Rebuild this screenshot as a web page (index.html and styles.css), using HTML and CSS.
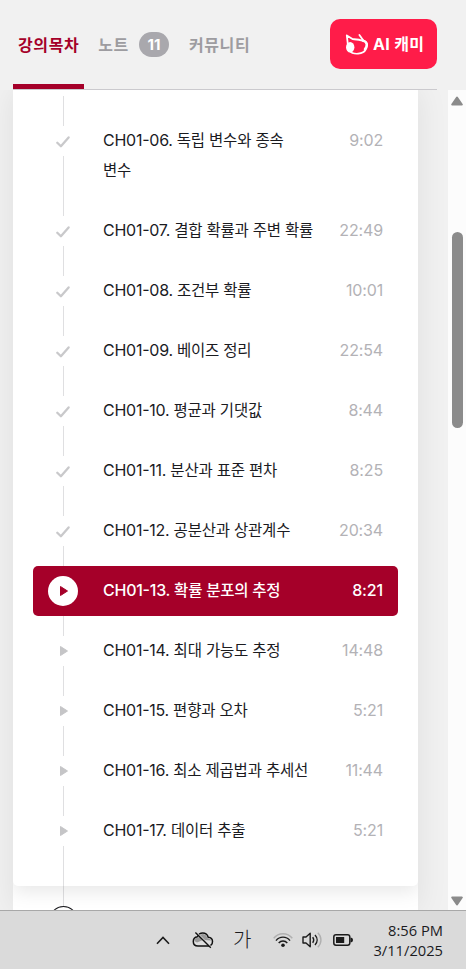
FILE: index.html
```html
<!DOCTYPE html>
<html lang="ko">
<head>
  <meta charset="UTF-8" />
  <meta name="viewport" content="width=device-width, initial-scale=1.0"/>
  <title>강의목차</title>
  <link rel="stylesheet" href="styles.css">
</head>
<body>

<header class="header">
  <nav class="tabs">
    <a class="tab active">강의목차</a>
    <a class="tab note">노트 <span class="badge">11</span></a>
    <a class="tab">커뮤니티</a>
  </nav>
  <button class="ai-button">
    <svg width="24" height="24" viewBox="0 0 24 24" fill="none" stroke="#fff" stroke-linecap="round" stroke-linejoin="round">
      <path d="M2.8 3.4 L3.8 12 M2.8 3.4 L8.9 7.2 C12.4 7.4 15.5 7.4 18.4 8.8 M15.4 3 L19.2 8.2" stroke-width="1.8"/>
      <path d="M18.4 8.5 C23.8 9.4 24 13 22 17 C19.4 22.5 9.4 23.5 5 18.5" stroke-width="1.7"/>
      <path d="M19 8.6 C24 10 23 14.5 20.8 17.2" stroke-width="2.2"/>
      <ellipse cx="6.2" cy="15.2" rx="4.2" ry="5.2" fill="#fff" stroke="none"/>
    </svg>
    <span>AI 캐미</span>
  </button>
</header>

<main class="content">
  <div class="panel">
    <section class="card">
      <ol class="lectures">
        <li><div class="row"><span class="icon"><svg class="check" viewBox="0 0 14 12"><path d="M1.3 6.7 L4.9 10.2 L12.6 1.4"/></svg></span><p class="title"><span class="no">CH01-06.</span> 독립 변수와 종속<br>변수</p><span class="time">9:02</span></div></li>
        <li><div class="row"><span class="icon"><svg class="check" viewBox="0 0 14 12"><path d="M1.3 6.7 L4.9 10.2 L12.6 1.4"/></svg></span><p class="title"><span class="no">CH01-07.</span> 결합 확률과 주변 확률</p><span class="time">22:49</span></div></li>
        <li><div class="row"><span class="icon"><svg class="check" viewBox="0 0 14 12"><path d="M1.3 6.7 L4.9 10.2 L12.6 1.4"/></svg></span><p class="title"><span class="no">CH01-08.</span> 조건부 확률</p><span class="time">10:01</span></div></li>
        <li><div class="row"><span class="icon"><svg class="check" viewBox="0 0 14 12"><path d="M1.3 6.7 L4.9 10.2 L12.6 1.4"/></svg></span><p class="title"><span class="no">CH01-09.</span> 베이즈 정리</p><span class="time">22:54</span></div></li>
        <li><div class="row"><span class="icon"><svg class="check" viewBox="0 0 14 12"><path d="M1.3 6.7 L4.9 10.2 L12.6 1.4"/></svg></span><p class="title"><span class="no">CH01-10.</span> 평균과 기댓값</p><span class="time">8:44</span></div></li>
        <li><div class="row"><span class="icon"><svg class="check" viewBox="0 0 14 12"><path d="M1.3 6.7 L4.9 10.2 L12.6 1.4"/></svg></span><p class="title"><span class="no">CH01-11.</span> 분산과 표준 편차</p><span class="time">8:25</span></div></li>
        <li><div class="row"><span class="icon"><svg class="check" viewBox="0 0 14 12"><path d="M1.3 6.7 L4.9 10.2 L12.6 1.4"/></svg></span><p class="title"><span class="no">CH01-12.</span> 공분산과 상관계수</p><span class="time">20:34</span></div></li>
        <li><div class="row playing"><span class="icon"><svg class="play" viewBox="0 0 8 10"><path d="M0.5 0.5 L7.5 5 L0.5 9.5 Z"/></svg></span><p class="title"><span class="no">CH01-13.</span> 확률 분포의 추정</p><span class="time">8:21</span></div></li>
        <li><div class="row"><span class="icon"><svg class="play" viewBox="0 0 8 10"><path d="M0.5 0.5 L7.5 5 L0.5 9.5 Z"/></svg></span><p class="title"><span class="no">CH01-14.</span> 최대 가능도 추정</p><span class="time">14:48</span></div></li>
        <li><div class="row"><span class="icon"><svg class="play" viewBox="0 0 8 10"><path d="M0.5 0.5 L7.5 5 L0.5 9.5 Z"/></svg></span><p class="title"><span class="no">CH01-15.</span> 편향과 오차</p><span class="time">5:21</span></div></li>
        <li><div class="row"><span class="icon"><svg class="play" viewBox="0 0 8 10"><path d="M0.5 0.5 L7.5 5 L0.5 9.5 Z"/></svg></span><p class="title"><span class="no">CH01-16.</span> 최소 제곱법과 추세선</p><span class="time">11:44</span></div></li>
        <li><div class="row"><span class="icon"><svg class="play" viewBox="0 0 8 10"><path d="M0.5 0.5 L7.5 5 L0.5 9.5 Z"/></svg></span><p class="title"><span class="no">CH01-17.</span> 데이터 추출</p><span class="time">5:21</span></div></li>
      </ol>
    </section>
    <div class="next-chapter"><span class="next-circle"></span></div>
  </div>
  <div class="scrollbar">
    <svg width="12" height="10" viewBox="0 0 12 10"><path d="M6 1.5 L10.8 8.5 H1.2 Z"/></svg>
    <div class="thumb"></div>
    <svg width="12" height="10" viewBox="0 0 12 10"><path d="M6 8.5 L10.8 1.5 H1.2 Z"/></svg>
  </div>
</main>

<footer class="taskbar">
  <svg class="chevron" width="14" height="9" viewBox="0 0 14 9" fill="none" stroke="#1b1b1b" stroke-width="1.6"><path d="M1 7.8 L7 1.5 L13 7.8"/></svg>
  <svg class="cloud" width="22" height="18" viewBox="0 0 22 18">
    <path d="M6 15 C2.5 15 1.3 12.5 1.3 10.5 C1.3 8 3 6 5.5 5.7 C6.5 3.3 8.3 2 10.7 2 C13.8 2 15.6 4 16.2 6.2 C19 6.4 20.5 8.2 20.5 10.5 C20.5 13 18.7 15 16.2 15 Z" fill="#dedede" stroke="#111" stroke-width="1.5"/>
    <path d="M2.3 10 C3 7.5 5 6.5 6.5 6.6 C7.5 3.8 9.5 2.8 11 2.9 C13.5 3 15 5 15.4 7.2 C17 7 19 8 19.5 9.5 L11 9 L5 11.5 Z" fill="#999"/>
    <path d="M4.4 1.6 L19.8 16.8" stroke="#dedede" stroke-width="1.4"/>
    <path d="M3.4 1.6 L18.8 16.8" stroke="#111" stroke-width="1.4"/>
  </svg>
  <span class="ime">가</span>
  <svg class="wifi" width="20" height="16" viewBox="0 0 20 16" fill="none" stroke="#1b1b1b" stroke-width="1.4">
    <path d="M0.7 6.3 C5.5 0.3 14.5 0.3 19.3 6.3" stroke="#b0b0b0"/>
    <path d="M3 8.6 C6.7 4 13.3 4 17 8.6"/>
    <path d="M5.7 11 C8 8.3 12 8.3 14.3 11"/>
    <circle cx="10" cy="13.2" r="1.8" fill="#1b1b1b" stroke="none"/>
  </svg>
  <svg class="volume" width="20" height="18" viewBox="0 0 20 18" fill="none" stroke="#1b1b1b" stroke-width="1.4" stroke-linejoin="round">
    <path d="M1 6 H4 L8.2 2.3 V15.7 L4 12 H1 Z"/>
    <path d="M10.7 6.2 C12 8 12 10 10.7 11.8 M13 4 C15.8 7 15.8 11 13 14"/>
    <path d="M15.8 1.8 C20 6 20 12 15.8 16.2" stroke="#b0b0b0"/>
  </svg>
  <svg class="battery" width="20" height="12" viewBox="0 0 20 12">
    <rect x="0.8" y="0.8" width="16" height="10.4" rx="2.2" fill="none" stroke="#1b1b1b" stroke-width="1.5"/>
    <rect x="3" y="3" width="8.2" height="6" fill="#1b1b1b"/>
    <path d="M17.5 3.8 H18.5 Q20 4 20 6 Q20 8 18.5 8.2 H17.5 Z" fill="#1b1b1b"/>
  </svg>
  <div class="clock">
    <div>8:56 PM</div>
    <div>3/11/2025</div>
  </div>
</footer>

</body>
</html>
```
FILE: styles.css
```css
* {
  box-sizing: border-box;
}
body {
  margin: 0;
  height: 969px;
  display: flex;
  flex-direction: column;
  overflow: hidden;
  background: #f1f1f1;
  font-family: Inter, "Noto Sans CJK KR", sans-serif;
  font-size: 16px;
  color: #1b1b1f;
}
.header {
  flex: none;
  height: 90px;
  margin: 0 29px 0 13px;
  display: flex;
  justify-content: space-between;
  border-bottom: 1px solid #cbcace;
}
.tabs {
  display: flex;
  height: 89px;
}
.tab {
  display: flex;
  align-items: center;
  padding: 4px 5px 0;
  margin-right: 9px;
  border-bottom: 5px solid transparent;
  font-weight: 700;
  letter-spacing: 0.6px;
  color: #9d9ca0;
  white-space: nowrap;
}
.tab.note {
  margin-right: 10px;
}
.tab.active {
  color: #a50029;
  border-bottom-color: #a50029;
}
.badge {
  width: 30px;
  height: 25px;
  margin-left: 10px;
  border-radius: 13px;
  background: #a9a8ad;
  color: #fff;
  font-size: 15px;
  letter-spacing: 0;
  line-height: 25px;
  text-align: center;
}
.ai-button {
  width: 107px;
  height: 50px;
  margin-top: 19px;
  padding: 0 0 0 14px;
  display: flex;
  align-items: center;
  gap: 5px;
  border: none;
  border-radius: 10px;
  background: #ff1c49;
  color: #fff;
  font-family: inherit;
  font-size: 16px;
  font-weight: 700;
  letter-spacing: 0.3px;
  white-space: nowrap;
}
.ai-button span {
  padding-bottom: 2px;
}
.content {
  flex: none;
  height: 820px;
  display: flex;
  justify-content: space-between;
  overflow: hidden;
}
.panel {
  width: 405px;
  height: 820px;
  margin-left: 13px;
  background: #fff;
  box-shadow: 0 0 30px rgba(0, 0, 0, 0.08);
}
.card {
  height: 796px;
  padding-top: 6px;
  border-radius: 0 0 5px 5px;
  background: #fff;
  box-shadow: 0 5px 20px rgba(0, 0, 0, 0.1);
  clip-path: inset(0 0 -30px 0);
}
/* the vertical line runs behind the rows, each icon box covers its part */
.lectures {
  height: 790px;
  margin: 0;
  padding: 15px 20px 0;
  list-style: none;
  background: linear-gradient(#dfdfe1, #dfdfe1) 50px 0 / 1px 100% no-repeat;
}
.lectures li {
  padding: 5px 0;
}
.row {
  display: flex;
  align-items: flex-start;
  padding: 10px 15px;
  border-radius: 5px;
  line-height: 28px;
}
.icon {
  flex: none;
  width: 30px;
  height: 30px;
  display: flex;
  align-items: center;
  justify-content: center;
  background: #fff;
}
.check {
  width: 14px;
  height: 12px;
  margin-top: 1px;
  fill: none;
  stroke: #c9c9cb;
  stroke-width: 2.3;
  stroke-linecap: round;
  stroke-linejoin: round;
}
.play {
  width: 8px;
  height: 10px;
  margin-left: 2px;
  fill: #c5c5c7;
  stroke: #c5c5c7;
  stroke-linejoin: round;
}
.title {
  flex: 1;
  margin: 0 0 0 25px;
  font-size: 15.5px;
  letter-spacing: -0.2px;
  line-height: 30px;
  white-space: nowrap;
}
.no {
  font-size: 16px;
  letter-spacing: -0.25px;
  line-height: 1;
  font-feature-settings: "case";
}
.time {
  color: #b3b2b6;
  letter-spacing: -0.15px;
}
.playing {
  background: #a50029;
  color: #fff;
  font-weight: 500;
}
.playing .time {
  color: #fff;
}
.playing .icon {
  border-radius: 50%;
}
.playing .play {
  fill: #a50029;
  stroke: #a50029;
}
.next-chapter {
  height: 24px;
  padding: 20px 0 0 36px;
  overflow: hidden;
  background: linear-gradient(#dfdfe1, #dfdfe1) 50px 0 / 1px 20px no-repeat;
}
.next-circle {
  display: block;
  width: 29px;
  height: 30px;
  border: 1px solid #1b1b1f;
  border-radius: 50%;
  background: #fff;
}
.scrollbar {
  z-index: 1;
  width: 18px;
  height: 820px;
  padding: 6px 3px 4px;
  display: flex;
  flex-direction: column;
  justify-content: space-between;
  background: #fcfcfc;
}
.scrollbar svg {
  fill: #8b8b8b;
  stroke: #8b8b8b;
  stroke-width: 2;
  stroke-linejoin: round;
}
.thumb {
  width: 11px;
  height: 196px;
  margin: 126px 0 auto 1px;
  border-radius: 6px;
  background: #8b8b8b;
}
.taskbar {
  flex: none;
  height: 59px;
  padding-left: 156px;
  display: flex;
  align-items: center;
  border-top: 1px solid #a8a8a8;
  background: #dadada;
}
.cloud {
  margin-left: 22px;
}
.ime {
  width: 22px;
  margin-left: 19px;
  font-size: 20px;
  font-weight: 300;
  line-height: 24px;
}
.wifi {
  margin-left: 18px;
}
.volume {
  margin-left: 9px;
}
.battery {
  margin-left: 11px;
}
.clock {
  flex: 1;
  padding-right: 23px;
  font-family: "Open Sans", "Noto Sans", sans-serif;
  font-size: 14.7px;
  line-height: 20px;
  text-align: right;
}
```
